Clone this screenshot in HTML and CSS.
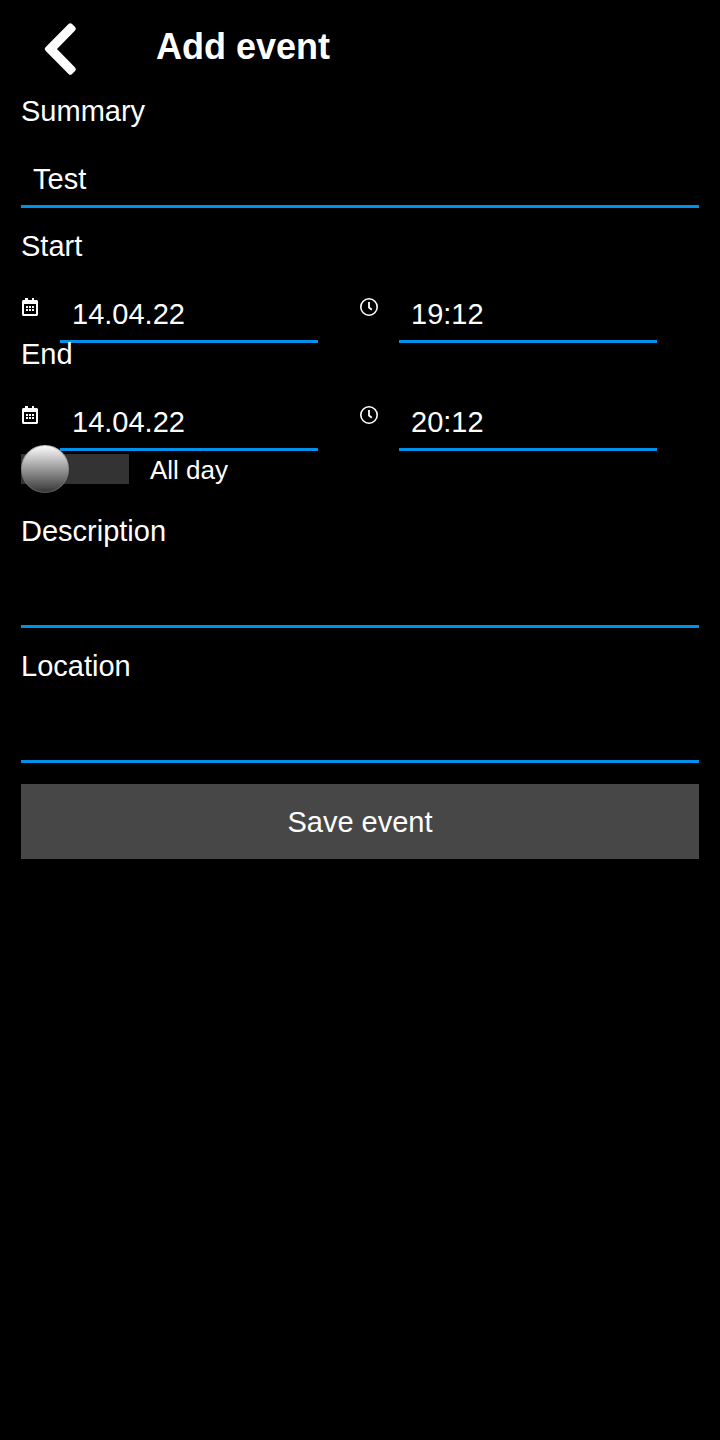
FILE: index.html
```html
<!DOCTYPE html>
<html lang="en">
<head>
<meta charset="utf-8">
<meta name="viewport" content="width=device-width, initial-scale=1">
<title>Add event</title>
<link rel="stylesheet" href="styles.css">
</head>
<body>
<svg class="defs" aria-hidden="true">
  <symbol id="calendar" viewBox="0 0 18 18">
    <path fill="currentColor" fill-rule="evenodd" d="M4 0h3v2h4V0h2v2h3l1 1v14l-1 1H2l-1-1V3l1-1h2zM3 6v10h12V6z"/>
    <path fill="currentColor" d="M5 8h2v2H5zM8 8h2v2H8zM11 8h2v2h-2zM5 11h2v2H5zM8 11h2v2H8zM11 11h2v2h-2z"/>
  </symbol>
  <symbol id="clock" viewBox="0 0 18 18">
    <circle cx="9" cy="9" r="8.2" fill="none" stroke="currentColor" stroke-width="1.6"/>
    <path d="M9 4v5.5l2.8 2.3" fill="none" stroke="currentColor" stroke-width="1.8"/>
  </symbol>
</svg>
<header class="header">
  <button class="back" type="button" aria-label="Back">
    <svg width="36" height="56" viewBox="0 0 36 56" aria-hidden="true">
      <path d="M5.3 28 28.3 4.8l3 3L11.5 28l19.8 20.2-3 3z" fill="#fff" stroke="#fff" stroke-width="5" stroke-linejoin="round"/>
    </svg>
  </button>
  <h1 class="title">Add event</h1>
</header>
<main>
  <form class="form">
    <div class="field">
      <label class="label" for="summary">Summary</label>
      <input class="input" id="summary" type="text" value="Test">
    </div>
    <fieldset class="moment">
      <legend class="label">Start</legend>
      <div class="pickers">
        <div class="picker">
          <label class="icon" for="start-date" aria-label="Start date"><svg width="18" height="18"><use href="#calendar"/></svg></label>
          <input class="input" id="start-date" type="text" value="14.04.22">
        </div>
        <div class="picker">
          <label class="icon" for="start-time" aria-label="Start time"><svg width="18" height="18"><use href="#clock"/></svg></label>
          <input class="input" id="start-time" type="text" value="19:12">
        </div>
      </div>
    </fieldset>
    <fieldset class="moment">
      <legend class="label">End</legend>
      <div class="pickers">
        <div class="picker">
          <label class="icon" for="end-date" aria-label="End date"><svg width="18" height="18"><use href="#calendar"/></svg></label>
          <input class="input" id="end-date" type="text" value="14.04.22">
        </div>
        <div class="picker">
          <label class="icon" for="end-time" aria-label="End time"><svg width="18" height="18"><use href="#clock"/></svg></label>
          <input class="input" id="end-time" type="text" value="20:12">
        </div>
      </div>
    </fieldset>
    <div class="all-day">
      <input class="switch" id="all-day" type="checkbox">
      <label class="switch-label" for="all-day">All day</label>
    </div>
    <div class="field">
      <label class="label" for="description">Description</label>
      <input class="input" id="description" type="text">
    </div>
    <div class="field">
      <label class="label" for="location">Location</label>
      <input class="input" id="location" type="text">
    </div>
    <button class="save" type="button">Save event</button>
  </form>
</main>
</body>
</html>
```
FILE: styles.css
```css
*,
*::before {
  box-sizing: border-box;
}

body {
  margin: 0;
  min-height: 100vh;
  background: #000;
  color: #fff;
  font-family: "Liberation Sans", Arial, sans-serif;
  font-size: 29px;
}

.defs {
  position: absolute;
  width: 0;
  height: 0;
}

svg {
  display: block;
}

.header {
  display: flex;
  align-items: center;
  height: 94px;
  padding: 0 21px;
}

.back {
  display: flex;
  justify-content: center;
  width: 78px;
  padding: 4px 0 0;
  border: 0;
  background: none;
}

.title {
  margin: 0 0 0 57px;
  font-size: 36px;
  line-height: 42px;
}

.form {
  display: flex;
  flex-direction: column;
  padding: 0 21px 21px;
}

.field {
  display: flex;
  flex-direction: column;
  margin-bottom: 21px;
}

.label {
  display: block;
  height: 34px;
  margin-bottom: 22px;
  padding: 0;
  line-height: 34px;
}

.input {
  width: 100%;
  min-width: 0;
  height: 58px;
  padding: 3px 12px 0;
  border: 0;
  border-bottom: 3px solid #0091ea;
  border-radius: 0;
  outline: 0;
  background: none;
  color: inherit;
  font: inherit;
}

.moment {
  min-width: 0;
  margin: 0;
  padding: 0;
  border: 0;
}

/* The fields are taller than their row, so the underline meets the next line. */
.pickers {
  display: grid;
  grid-template-columns: 1fr 1fr;
  height: 52px;
}

.picker {
  display: flex;
  align-items: flex-start;
  gap: 21px;
  padding-right: 42px;
}

.icon {
  flex: none;
  padding-top: 13px;
}

.all-day {
  display: flex;
  align-items: center;
  gap: 21px;
  height: 48px;
  margin-bottom: 21px;
}

.switch {
  appearance: none;
  position: relative;
  flex: none;
  width: 108px;
  height: 30px;
  margin: 0;
  background: #333;
}

.switch::before {
  content: "";
  position: absolute;
  top: -9px;
  left: 0;
  width: 48px;
  height: 48px;
  border: 1px solid rgba(128, 128, 128, 0.5);
  border-radius: 50%;
  background: linear-gradient(#fff, #333) border-box;
}

.switch:checked::before {
  right: 0;
  left: auto;
}

.switch-label {
  padding-top: 2px;
  font-size: 26px;
}

.save {
  height: 75px;
  padding: 2px 0 0;
  border: 0;
  background: #474747;
  color: inherit;
  font: inherit;
}
```
